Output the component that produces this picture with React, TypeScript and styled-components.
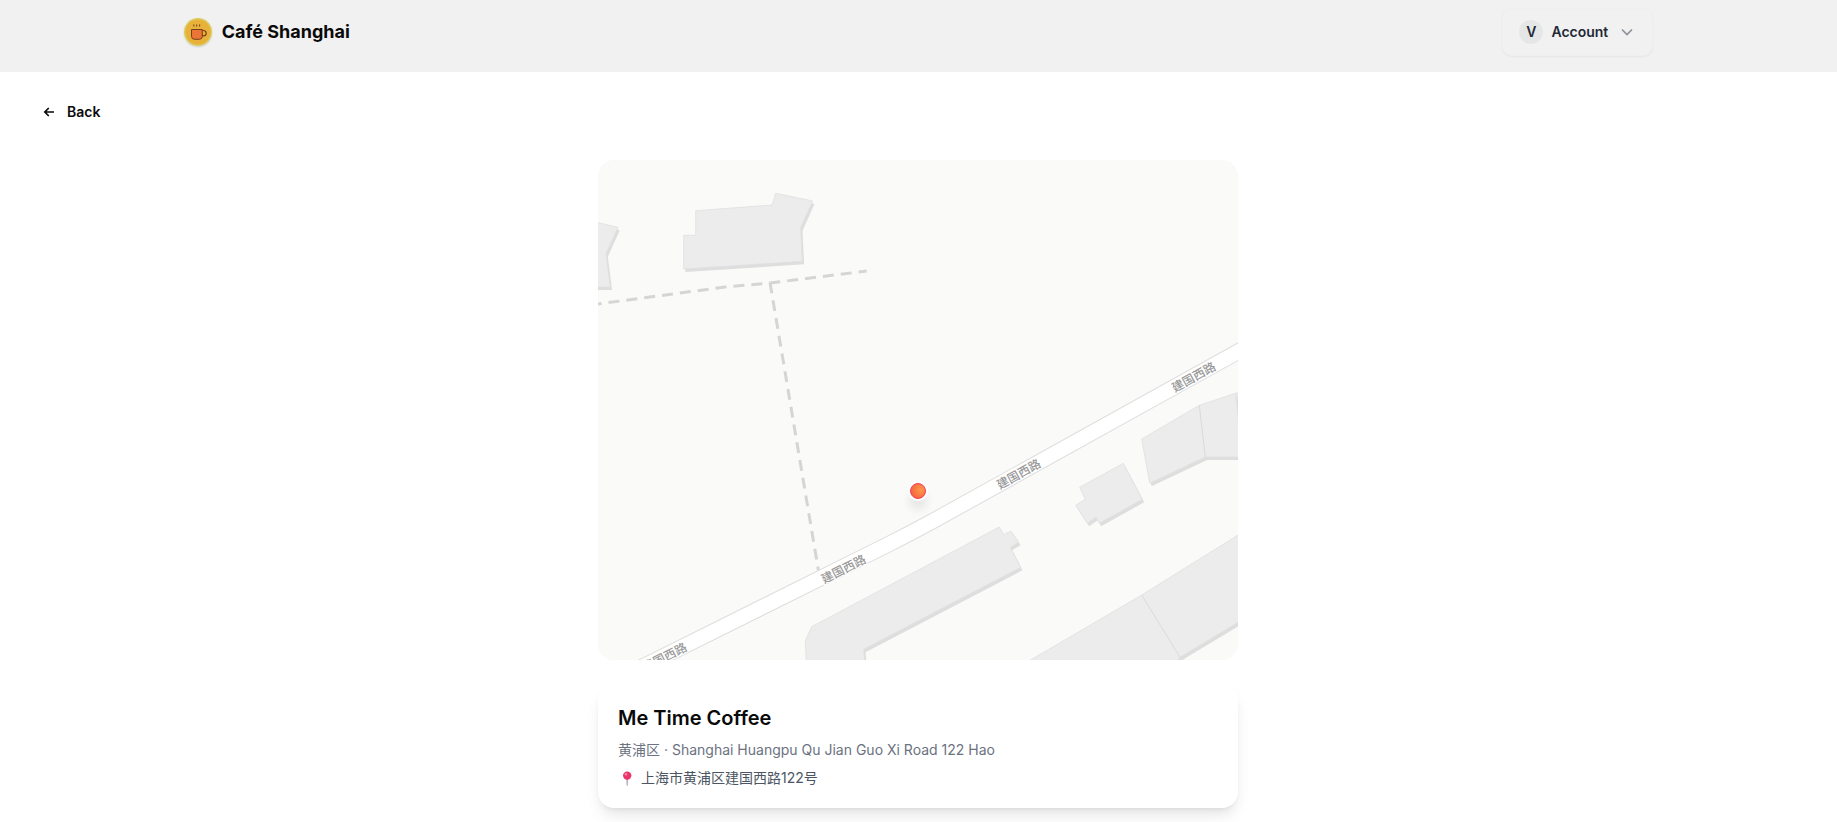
import React from "react";
import styled, { createGlobalStyle } from "styled-components";

const GlobalStyle = createGlobalStyle`
  *, *::before, *::after { box-sizing: border-box; }
  body {
    margin: 0;
    background: #ffffff;
    color: #0a0a0a;
    font-family: Inter, "Noto Sans CJK SC", sans-serif;
  }
`;

const Header = styled.header`
  background: #f1f1f1;
  padding: 8px 0 16px;
`;

const HeaderInner = styled.div`
  width: 80%;
  margin: 0 auto;
  display: flex;
  align-items: center;
  justify-content: space-between;
`;

const Brand = styled.a`
  display: flex;
  align-items: center;
  gap: 10px;
  color: #0a0a0a;
  font-size: 18px;
  line-height: 28px;
  font-weight: 700;
  text-decoration: none;
`;

const LogoBadge = styled.span`
  display: flex;
  width: 28px;
  height: 28px;
  border-radius: 50%;
  box-shadow: 0 1px 2px rgba(0, 0, 0, 0.15);
`;

const AccountButton = styled.button`
  display: flex;
  align-items: center;
  gap: 8px;
  height: 48px;
  padding: 0 18px 0 16px;
  border: 1px solid #efefef;
  border-radius: 10px;
  background: #f1f1f1;
  box-shadow: 0 1px 2px rgba(0, 0, 0, 0.05);
  color: #1f2937;
  font: 600 14px/20px Inter, sans-serif;
  cursor: pointer;
`;

const Avatar = styled.span`
  display: grid;
  place-items: center;
  width: 24px;
  height: 24px;
  border-radius: 50%;
  background: #e5e7e6;
`;

const Chevron = styled.svg`
  margin-left: 4px;
`;

const BackButton = styled.button`
  display: flex;
  align-items: center;
  gap: 8px;
  height: 40px;
  margin: 20px 24px 28px;
  padding: 0 16px;
  border: 0;
  border-radius: 8px;
  background: transparent;
  color: #0a0a0a;
  font: 600 14px/20px Inter, sans-serif;
  cursor: pointer;
`;

const Content = styled.main`
  width: 100%;
  max-width: 641px;
  margin: 0 auto;
  display: flex;
  flex-direction: column;
  gap: 24px;
  padding: 0 1px 14px 0;
`;

const MapPanel = styled.div`
  overflow: hidden;
  border-radius: 16px;
  background: #fafaf9;
`;

const MapDrawing = styled.svg`
  display: block;
  width: 100%;
  height: auto;
`;

const RoadName = styled.text`
  font: 500 12px "Noto Sans CJK SC", sans-serif;
  fill: #999999;
  stroke: #ffffff;
  stroke-width: 2px;
  paint-order: stroke;
  text-anchor: middle;
  dominant-baseline: central;
`;

const Card = styled.section`
  display: flex;
  flex-direction: column;
  gap: 8px;
  padding: 20px;
  border-radius: 16px;
  background: #ffffff;
  box-shadow: 0 10px 15px -3px rgba(0, 0, 0, 0.1), 0 4px 6px -4px rgba(0, 0, 0, 0.1);
`;

const CafeName = styled.h1`
  margin: 0;
  font-size: 20px;
  line-height: 28px;
  font-weight: 600;
`;

const Detail = styled.p<{ $color: string }>`
  display: flex;
  align-items: center;
  gap: 4px;
  margin: 0;
  font-size: 14px;
  line-height: 20px;
  color: ${(p) => p.$color};
`;

const buildings = [
  "M97.7 50.7 174 45 177.7 33.3 214.7 41 202.7 67.7 204.3 101.3 85.7 109V75.3H97.7Z",
  "M-5 61.5 20 67.3 8 93.7 12.3 127H-5Z",
  "M637.7 233.3 650 230V290H640Z",
  "M543.7 279 601.3 245.3 637.7 233.3 642 275V297H607.3L551.7 323.3Z",
  "M525.3 303.3 544.3 339.3 501.3 363.3 498 357.3 489.3 363.3 477.7 345.3 487.3 339.3 481.7 327.3Z",
  "M401.3 367 405.7 374.7 413 371 420.7 382.3 412.3 387.3 422.7 407.3 265.7 489.3 267.3 505H208.3L207.3 480.7 213.7 466.7Z",
  "M424 505 543.7 435 645 372V459.3L582 497.3 572 510Z",
];

const roadPath = "M38 510 290 384.5Q312 373.5 334 361.5L660 180.6";

const roadNames = [
  { x: 66, y: 496, angle: -27 },
  { x: 245, y: 408, angle: -27 },
  { x: 420, y: 313, angle: -29 },
  { x: 595, y: 216, angle: -29 },
];

function CupLogo() {
  return (
    <svg width="28" height="28" viewBox="0 0 28 28" fill="none" aria-hidden="true">
      <circle cx="14" cy="14" r="14" fill="#dccb5c" />
      <circle cx="14" cy="14" r="12.6" fill="#e8b23a" />
      <path
        d="M7.5 11.5h10.8v6.8a3 3 0 0 1-3 3h-4.8a3 3 0 0 1-3-3Z"
        fill="#ec7436"
        stroke="#74401b"
        strokeWidth="1"
      />
      <path d="M18.3 12.5h1.2a2.6 2.6 0 0 1 0 5.4h-1.2" stroke="#74401b" strokeWidth="1.2" />
      <path d="M9.8 6.5v2M12.7 6.5v2M15.6 6.5v2" stroke="#6b4a1d" strokeWidth="1.1" />
    </svg>
  );
}

function PinIcon() {
  return (
    <svg width="19" height="18" viewBox="0 0 19 18" aria-hidden="true">
      <path d="M8.4 9h1.6l-.2 7.2-.6.8-.6-.8Z" fill="#aaa6b3" />
      <circle cx="9.2" cy="6.6" r="4.2" fill="#e8336c" />
      <circle cx="8" cy="5.2" r="1.3" fill="#ff86a8" />
    </svg>
  );
}

function StreetMap() {
  return (
    <MapDrawing viewBox="0 0 640 500" role="img" aria-label="Map of Me Time Coffee">
      <defs>
        <radialGradient id="pin" cx="0.68" cy="0.42" r="0.6">
          <stop offset="0" stopColor="#ff9a4a" />
          <stop offset="1" stopColor="#f5683f" />
        </radialGradient>
        <filter id="pinShadow" x="-150%" y="-150%" width="400%" height="400%">
          <feGaussianBlur stdDeviation="5" />
        </filter>
      </defs>
      <rect width="640" height="500" fill="#fafaf9" />
      <g fill="none" stroke="#d5d5d5" strokeWidth="3" strokeDasharray="11 7">
        <path d="M0 144 127 127 172 123 268.7 111" strokeDashoffset="7.4" />
        <path d="M172 122.5 220.5 411" />
      </g>
      {buildings.map((d) => (
        <g key={d}>
          <path d={d} fill="#dedede" transform="translate(1.8 3)" />
          <path d={d} fill="#ececec" stroke="#dfdfdf" strokeWidth="0.8" />
        </g>
      ))}
      <path
        d="M601.3 245.3 607.3 297M543.7 435 582 497.3"
        stroke="#dadada"
        strokeWidth="1"
      />
      <path d={roadPath} fill="none" stroke="#dedede" strokeWidth="16.4" />
      <path d={roadPath} fill="none" stroke="#ffffff" strokeWidth="14.4" />
      {roadNames.map((r) => (
        <RoadName key={r.x} transform={`translate(${r.x} ${r.y}) rotate(${r.angle})`}>
          建国西路
        </RoadName>
      ))}
      <circle cx="320" cy="341" r="9" fill="#000000" opacity="0.08" filter="url(#pinShadow)" />
      <circle cx="320" cy="331" r="10" fill="#ffffff" />
      <circle cx="320" cy="331" r="7.5" fill="url(#pin)" stroke="#f43f5e" strokeWidth="1" />
    </MapDrawing>
  );
}

export default function App() {
  return (
    <>
      <GlobalStyle />
      <Header>
        <HeaderInner>
          <Brand href="#">
            <LogoBadge>
              <CupLogo />
            </LogoBadge>
            Café Shanghai
          </Brand>
          <AccountButton type="button">
            <Avatar>V</Avatar>
            Account
            <Chevron width="14" height="14" viewBox="0 0 14 14" fill="none" aria-hidden="true">
              <path d="m2 4.5 5 5 5-5" stroke="#8b9097" strokeWidth="1.6" />
            </Chevron>
          </AccountButton>
        </HeaderInner>
      </Header>
      <BackButton type="button">
        <svg width="19" height="16" viewBox="0 0 19 16" fill="none" aria-hidden="true">
          <path d="M14 8H5M8.8 4 4.8 8l4 4" stroke="#0a0a0a" strokeWidth="1.7" />
        </svg>
        Back
      </BackButton>
      <Content>
        <MapPanel>
          <StreetMap />
        </MapPanel>
        <Card>
          <CafeName>Me Time Coffee</CafeName>
          <Detail $color="#6b7280">黄浦区 · Shanghai Huangpu Qu Jian Guo Xi Road 122 Hao</Detail>
          <Detail $color="#4b5563">
            <PinIcon />
            上海市黄浦区建国西路122号
          </Detail>
        </Card>
      </Content>
    </>
  );
}
